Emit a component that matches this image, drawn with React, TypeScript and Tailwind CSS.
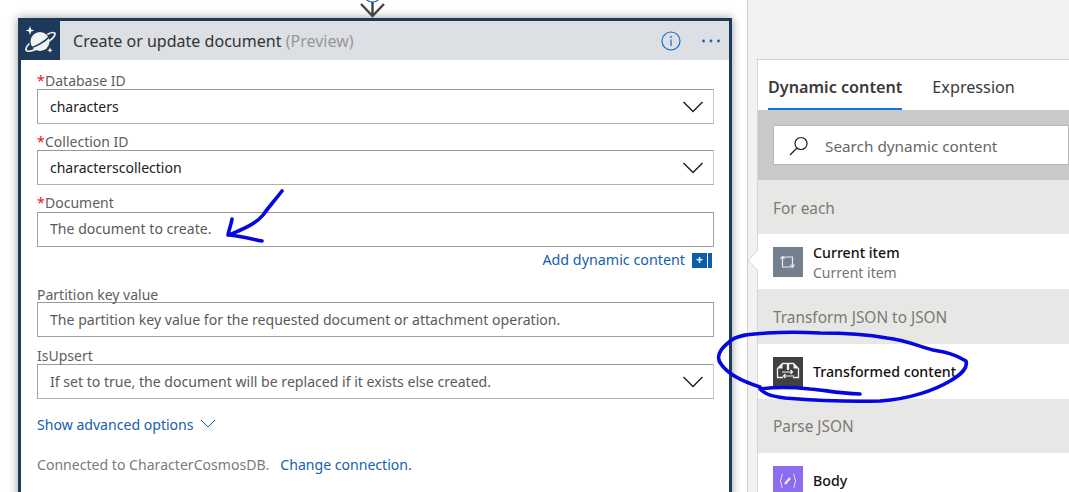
import React from "react";

const Chevron = ({ className = "" }: { className?: string }) => (
  <svg width="22" height="14" viewBox="0 0 22 14" className={className}>
    <path d="M1.5 2 L11 11.5 L20.5 2" fill="none" stroke="#222" strokeWidth="1.5" />
  </svg>
);

function Field({ label, required, value, muted, chevron, top, labelClass = "h-[17px] items-center", valueClass = "" }: { label: string; required?: boolean; value: string; muted?: boolean; chevron?: boolean; top: string; labelClass?: string; valueClass?: string }) {
  return (
    <div className={top}>
      <div className={`flex text-[14px] leading-[17px] text-[#5e5e5e] ${labelClass}`}>
        {required && <span className="mr-[1px] w-[7px] text-[#e8112d]">*</span>}
        <span>{label}</span>
      </div>
      <div className={`flex h-[35px] items-center justify-between border-2 border-[#a0a0a0] border-t-[#999] pl-[12px] pr-[9px] ${muted ? "text-[14.08px] text-[#5a5a5a]" : "text-[14px] text-[#222]"} ${chevron ? "border-r-[#c8c8c8] border-b-[#b0b0b0]" : ""} ${valueClass}`} style={{ borderWidth: "1.5px" }}>
        <span>{value}</span>
        {chevron && <Chevron />}
      </div>
    </div>
  );
}

function SectionHeader({ text, h }: { text: string; h: string }) {
  return <div className={`flex items-center bg-[#e7e8e6] pl-[15px] text-[15.4px] text-[#7c7873] ${h}`}>{text}</div>;
}

function Row({ icon, title, sub, bg, h }: { icon: React.ReactNode; title: string; sub?: string; bg: string; h: string }) {
  return (
    <div className={`flex items-center bg-white pl-[15px] ${h}`}>
      <div className={`flex h-[30px] w-[30px] shrink-0 items-center justify-center ${bg}`}>{icon}</div>
      <div className="ml-[10px] flex flex-col">
        <span className={`text-[14.2px] font-medium leading-[20px] text-[#111] ${sub ? "mt-[1px]" : ""}`}>{title}</span>
        {sub && <span className="text-[14px] leading-[19px] text-[#77736f]">{sub}</span>}
      </div>
    </div>
  );
}

export default function App() {
  return (
    <div className="relative flex h-[492px] w-[1069px] overflow-hidden bg-white" style={{ fontFamily: '"Noto Sans", sans-serif' }}>
      {/* designer canvas */}
      <div className="h-full w-[747px] shrink-0 pl-[18px] pt-[18px]">
        <div className="h-[520px] w-[714px] border-[3px] border-[#1d3a5b] bg-white shadow-[0_0_9px_rgba(0,0,0,0.4)]">
          <div className="flex h-[39px] items-center bg-[#dcdfe4]">
            <div className="flex h-[39px] w-[39px] items-center justify-center bg-[#1d3a5b]">
              <svg width="39" height="39" viewBox="0 0 39 39">
                <circle cx="19" cy="20.5" r="9.5" fill="#f0f2f3" />
                <path d="M9 27 C 14 26 24 21 29 15" fill="none" stroke="#1d3a5b" strokeWidth="1.6" />
                <path d="M27 13 C 31 11 34 11 34 13 C 34 15 31 18 28 20 M8 23 C 5 26 4 29 6 30 C 9 31 13 29 16 28" fill="none" stroke="#f0f2f3" strokeWidth="1.7" strokeLinecap="round" />
                <path d="M9 5 l1.1 3.4 3.4 1.1 -3.4 1.1 -1.1 3.4 -1.1 -3.4 -3.4 -1.1 3.4 -1.1z" fill="#fff" />
                <path d="M29 26.5 l.8 2 2 .8 -2 .8 -.8 2 -.8 -2 -2 -.8 2 -.8z" fill="#fff" />
              </svg>
            </div>
            <div className="ml-[13px] flex-1 pt-[2px] text-[16.05px] text-[#333]">
              Create or update document <span className="text-[#979797]">(Preview)</span>
            </div>
            <svg width="20" height="20" viewBox="0 0 20 20" className="mr-[20px]">
              <circle cx="10" cy="10" r="9" fill="none" stroke="#1a6fc2" strokeWidth="1.2" />
              <path d="M10 8.5 V15" stroke="#1a6fc2" strokeWidth="1.2" />
              <circle cx="10" cy="6" r="0.9" fill="#1a6fc2" />
            </svg>
            <svg width="20" height="4" viewBox="0 0 20 4" className="mr-[8px]">
              <circle cx="2.5" cy="2" r="1.4" fill="#1565b5" />
              <circle cx="10" cy="2" r="1.4" fill="#1565b5" />
              <circle cx="17.5" cy="2" r="1.4" fill="#1565b5" />
            </svg>
          </div>
          <div className="pl-[16px] pr-[15px]">
            <Field top="mt-[12px]" required label="Database ID" value="characters" chevron />
            <Field top="mt-[9px]" required label="Collection ID" value="characterscollection" chevron />
            <Field top="mt-[9px]" labelClass="h-[18px] items-start" valueClass="pb-[2px]" required label="Document" value="The document to create." muted />
            <div className="mt-[4px] flex h-[18px] items-center justify-end text-[14.3px] text-[#1560ad]">
              <span>Add dynamic content</span>
              <span className="ml-[7px] flex h-[15px] w-[15px] items-center justify-center bg-[#0f5cab] text-[12px] font-bold leading-none text-white">+</span>
              <span className="ml-[1px] mr-[2px] h-[15px] w-[4px] bg-[#0f5cab]" />
            </div>
            <Field top="mt-[17px]" labelClass="h-[16px] items-center" label="Partition key value" value="The partition key value for the requested document or attachment operation." muted />
            <Field top="mt-[10px]" label="IsUpsert" value="If set to true, the document will be replaced if it exists else created." muted chevron />
            <div className="mt-[16px] flex h-[20px] items-center text-[14.08px] text-[#1560ad]">
              <span>Show advanced options</span>
              <svg width="16" height="10" viewBox="0 0 16 10" className="mb-[3px] ml-[6px]">
                <path d="M1 1 L8 8 L15 1" fill="none" stroke="#1560ad" strokeWidth="1" />
              </svg>
            </div>
            <div className="mt-[20px] flex h-[20px] items-center text-[14.08px] text-[#7b7b7b]">
              <span>Connected to CharacterCosmosDB.</span>
              <span className="ml-[11px] text-[#1560ad]">Change connection.</span>
            </div>
          </div>
        </div>
      </div>

      {/* dynamic content flyout */}
      <div className="flex h-full flex-1 flex-col border-l border-[#cfcfcf] bg-[#f2f2f2] pl-[9px] pt-[59px]">
        <div className="flex flex-1 flex-col border-l border-t border-[#d5d5d5] bg-white">
          <div className="flex h-[50px] items-stretch pl-[10px]">
            <div className="flex items-center border-b-2 border-[#0a78d6] pt-[6px] text-[16.2px] font-semibold text-[#3a3a3a]">Dynamic content</div>
            <div className="ml-[30px] flex items-center pt-[4px] text-[16.2px] text-[#3a3a3a]">Expression</div>
          </div>
          <div className="flex h-[70px] items-center bg-[#c8cac7] pl-[15px]">
            <div className="flex h-[40px] flex-1 items-center border border-[#b8b8b8] bg-white pl-[14px] pt-[2px]">
              <svg width="22" height="22" viewBox="0 0 22 22">
                <circle cx="13" cy="8.5" r="6" fill="none" stroke="#222" strokeWidth="1.2" />
                <path d="M9 13 L2 20" stroke="#222" strokeWidth="1.3" />
              </svg>
              <span className="ml-[15px] text-[15.3px] text-[#666]">Search dynamic content</span>
            </div>
          </div>
          <SectionHeader text="For each" h="h-[54px] pt-[3px]" />
          <Row
            h="h-[55px]"
            bg="bg-[#75808f]"
            title="Current item"
            sub="Current item"
            icon={
              <svg width="18" height="16" viewBox="0 0 18 16">
                <path d="M3.5 3 V13 H14.5 M3.5 3 H13.5 V12" fill="none" stroke="#e8ebee" strokeWidth="1.2" />
                <path d="M1.5 5 L3.5 2.5 L5.5 5 M11.5 10.5 L13.5 13 L15.5 10.5" fill="none" stroke="#e8ebee" strokeWidth="1.2" />
              </svg>
            }
          />
          <SectionHeader text="Transform JSON to JSON" h="h-[55px] pt-[3px]" />
          <Row
            h="h-[55px]"
            bg="bg-[#414141]"
            title="Transformed content"
            icon={
              <svg width="30" height="30" viewBox="0 0 30 30">
                <path d="M14.5 13 V6.5 H9.5 L4.5 11.5 V20.5 H10 M15.5 13 V6.5 H20.5 L25.5 11.5 V20.5 H20" fill="none" stroke="#f4f4f4" strokeWidth="1.3" />
                <path d="M4.5 11.5 H9.5 V6.5z M25.5 11.5 H20.5 V6.5z" fill="#f4f4f4" />
                <path d="M9 15 H19.5 M17.5 13 L19.5 15 L17.5 17 M21 19 H10.5 M12.5 17 L10.5 19 L12.5 21" fill="none" stroke="#f4f4f4" strokeWidth="1.2" />
              </svg>
            }
          />
          <SectionHeader text="Parse JSON" h="h-[54px] pt-[1px]" />
          <Row
            h="h-[55px]"
            bg="bg-[#8c6cf3]"
            title="Body"
            icon={
              <svg width="18" height="16" viewBox="0 0 18 16">
                <path d="M4 1 C2 1 3 6 1 8 C3 10 2 15 4 15 M14 1 C16 1 15 6 17 8 C15 10 16 15 14 15" fill="none" stroke="#eee" strokeWidth="1" />
                <path d="M6 11 L11 5" stroke="#eee" strokeWidth="2.2" />
              </svg>
            }
          />
        </div>
      </div>

      {/* connector arrow above card */}
      <svg className="absolute left-[355px] top-0" width="36" height="20" viewBox="0 0 36 20">
        <path d="M8 -7.5 A9.5 9.5 0 0 0 27 -7.5" fill="none" stroke="#1a6fc2" strokeWidth="1.2" />
        <path d="M17.5 2 V16 M6 4 L17.5 16 L29 4" fill="none" stroke="#444" strokeWidth="2.4" />
      </svg>

      {/* callout notch */}
      <svg className="absolute left-[747px] top-[249px]" width="12" height="24" viewBox="0 0 12 24">
        <path d="M11 1 L1 11.5 L11 22" fill="#fff" stroke="#d0d0d0" strokeWidth="1" />
      </svg>

      {/* hand-drawn ink */}
      <svg className="pointer-events-none absolute inset-0" width="1069" height="492" viewBox="0 0 1069 492">
        <g fill="none" stroke="#0606e0" strokeWidth="3.6" strokeLinecap="round" strokeLinejoin="round">
          <path d="M282 191 C 275 200 268 208 263 215 C 255 225 240 230 229 235 C 240 236 252 239 262 241" />
          <path d="M232 219 C 231 225 229 230 228 235" />
          <path d="M860 394 C 835 393 825 390 810 389 C 790 387 775 387 760 389 C 765 394 770 396 785 398 C 810 400 850 402 880 401 C 910 399 935 390 950 381 C 962 374 968 368 966 361 C 955 354 945 352 933 350 C 915 345 905 340 887 338 C 865 334 845 333 820 333 C 800 332 785 332 767 333 C 750 334 735 335 728 343 C 719 350 716 358 721 364 C 727 373 738 380 760 387" />
        </g>
      </svg>
    </div>
  );
}
